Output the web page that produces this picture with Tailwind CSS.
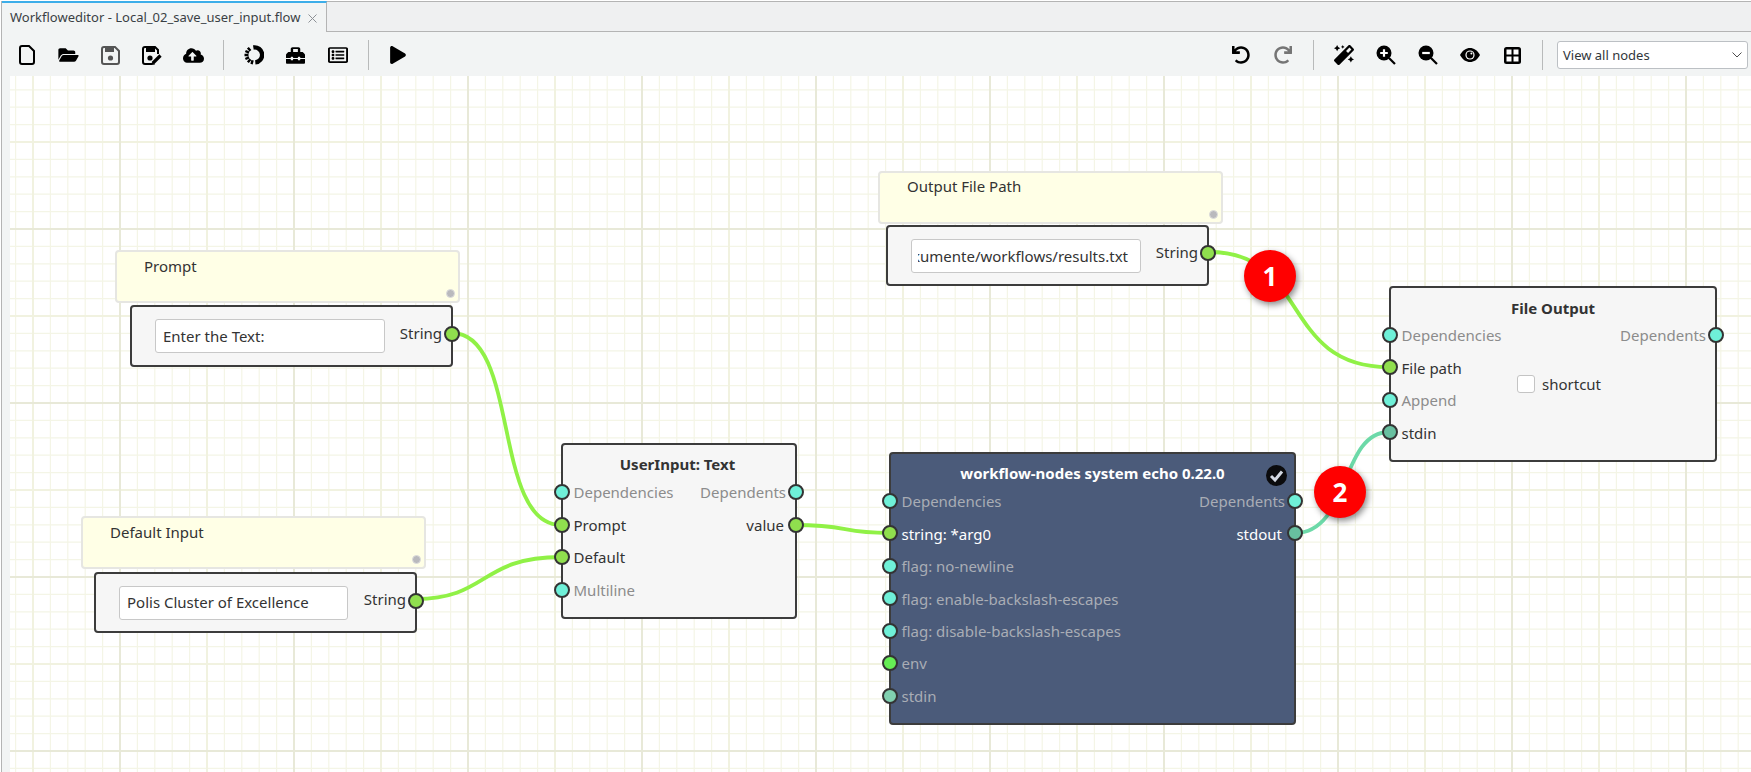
<!doctype html>
<html>
  <head>
    <title>Workfloweditor</title>
    <meta charset="UTF-8" />
    <script src="https://cdn.jsdelivr.net/npm/@tailwindcss/browser@4"></script>
  </head>
  <body class="bg-white h-[772px] w-[1751px] overflow-hidden pl-px pt-px font-['Noto_Sans',sans-serif] text-[#333]">
    <div class="h-[771px] flex flex-col border-l border-[#b4b4b4] bg-[#f2f4f4]">
      <!-- tab bar -->
      <div class="h-[31px] flex shrink-0 bg-[#eff0f1]">
        <div class="w-[325px] flex items-center pl-[8px] border-t-2 border-r border-t-[#3daee9] border-r-[#b4b4b4] bg-[#f2f4f4] text-[13px] text-[#3a3f44]">
          <span class="whitespace-nowrap">Workfloweditor - Local_02_save_user_input.flow</span>
          <svg class="ml-[8px] mt-px" width="9" height="9" viewBox="0 0 9 9"><path d="M.5.5l8 8M8.5.5l-8 8" stroke="#8d9196" fill="none" /></svg>
        </div>
        <div class="flex-1 border-t border-b border-[#b4b4b4]"></div>
      </div>

      <!-- toolbar -->
      <div class="h-[44px] flex shrink-0 items-center pt-[2px] pl-[4px]">
        <button class="w-[41.7px] h-[42px] flex items-center justify-center">
          <svg width="16" height="20" viewBox="0 0 16 20"><path d="M3 1H10L15 6V17A2 2 0 0 1 13 19H3A2 2 0 0 1 1 17V3A2 2 0 0 1 3 1Z" fill="none" stroke="#000" stroke-width="2" /></svg>
        </button>
        <button class="w-[41.7px] h-[42px] flex items-center justify-center">
          <svg width="21" height="18" viewBox="0 0 576 512"><path d="M572.694 292.093L500.27 416.248A63.997 63.997 0 0 1 444.989 448H45.025c-18.523 0-30.064-20.093-20.731-36.093l72.424-124.155A64 64 0 0 1 152 256h399.964c18.523 0 30.064 20.093 20.73 36.093zM152 224h328v-48c0-26.51-21.49-48-48-48H272l-64-64H48C21.49 64 0 85.49 0 112v278.046l69.077-118.418C86.214 242.25 118.179 224 152 224z" /></svg>
        </button>
        <button class="w-[41.7px] h-[42px] flex items-center justify-center">
          <svg width="19" height="19" viewBox="0 0 19 19"><path d="M3 1H14L18 5V16A2 2 0 0 1 16 18H3A2 2 0 0 1 1 16V3A2 2 0 0 1 3 1Z" fill="none" stroke="#555" stroke-width="2" /><rect x="4" y="1" width="9" height="5" fill="#555" /><circle cx="9.5" cy="12" r="2.6" fill="#555" /></svg>
        </button>
        <button class="w-[41.7px] h-[42px] flex items-center justify-center">
          <svg width="20" height="19" viewBox="0 0 20 19"><path d="M10 18H3A2 2 0 0 1 1 16V3A2 2 0 0 1 3 1H13L16 4V8" fill="none" stroke="#000" stroke-width="2" /><rect x="4" y="1" width="9" height="5" /><circle cx="8" cy="12" r="2.6" /><path d="M11 17L18.5 9.5" stroke="#000" stroke-width="3.2" /><path d="M9.5 19L10 15.5L13 18.5Z" /></svg>
        </button>
        <button class="w-[41.7px] h-[42px] flex items-center justify-center">
          <svg width="21" height="17" viewBox="0 0 640 512"><path d="M537.6 226.6c4.1-10.7 6.4-22.4 6.4-34.6 0-53-43-96-96-96-19.7 0-38.1 6-53.3 16.2C367 64.2 315.3 32 256 32c-88.4 0-160 71.6-160 160 0 2.7.1 5.4.2 8.1C40.2 219.8 0 273.2 0 336c0 79.5 64.5 144 144 144h368c70.7 0 128-57.3 128-128 0-61.9-44-113.6-102.4-125.4zM393.4 288H328v112c0 8.8-7.2 16-16 16h-48c-8.8 0-16-7.2-16-16V288h-65.4c-14.3 0-21.4-17.2-11.3-27.3l105.4-105.4c6.2-6.2 16.4-6.2 22.6 0l105.4 105.4c10.1 10.1 2.9 27.3-11.3 27.3z" /></svg>
        </button>
        <div class="w-px h-[30px] mx-[9px] bg-[#b8baba]"></div>
        <button class="w-[41.7px] h-[42px] flex items-center justify-center">
          <svg width="20" height="20" viewBox="0 0 20 20"><path d="M9.35 2.53A7.5 7.5 0 1 1 11.3 17.39" fill="none" stroke="#000" stroke-width="4.4" /><path d="M8.58 15.31L7.54 19.18M6.46 14.21L3.89 17.28M5.02 12.33L1.39 14.02M4.5 10H.5M5.02 7.67L1.39 5.98M6.46 5.79L3.89 2.72" stroke="#000" stroke-width="2.4" /></svg>
        </button>
        <button class="w-[41.7px] h-[42px] flex items-center justify-center">
          <svg width="21" height="19" viewBox="0 0 512 512"><path d="M502.63 214.63l-45.25-45.25c-6-6-14.14-9.37-22.63-9.37H384V80c0-26.51-21.49-48-48-48H176c-26.51 0-48 21.49-48 48v80H77.25c-8.49 0-16.62 3.37-22.63 9.37L9.37 214.63c-6 6.01-9.37 14.14-9.37 22.63V320h128v-16c0-8.84 7.16-16 16-16h32c8.84 0 16 7.16 16 16v16h128v-16c0-8.84 7.16-16 16-16h32c8.84 0 16 7.16 16 16v16h128v-82.75c0-8.48-3.37-16.62-9.37-22.62zM320 160H192V80h128v80zm64 208c0 8.84-7.16 16-16 16h-32c-8.84 0-16-7.16-16-16v-16H192v16c0 8.84-7.16 16-16 16h-32c-8.84 0-16-7.16-16-16v-16H0v96c0 17.67 14.33 32 32 32h448c17.67 0 32-14.33 32-32v-96H384v16z" /></svg>
        </button>
        <button class="w-[41.7px] h-[42px] flex items-center justify-center">
          <svg width="20" height="18" viewBox="0 0 512 512" preserveAspectRatio="none"><path d="M464 32H48C21.49 32 0 53.49 0 80v352c0 26.51 21.49 48 48 48h416c26.51 0 48-21.49 48-48V80c0-26.51-21.49-48-48-48zm-6 400H54a6 6 0 0 1-6-6V86a6 6 0 0 1 6-6h404a6 6 0 0 1 6 6v340a6 6 0 0 1-6 6zm-42-92v24c0 6.627-5.373 12-12 12H204c-6.627 0-12-5.373-12-12v-24c0-6.627 5.373-12 12-12h200c6.627 0 12 5.373 12 12zm0-96v24c0 6.627-5.373 12-12 12H204c-6.627 0-12-5.373-12-12v-24c0-6.627 5.373-12 12-12h200c6.627 0 12 5.373 12 12zm0-96v24c0 6.627-5.373 12-12 12H204c-6.627 0-12-5.373-12-12v-24c0-6.627 5.373-12 12-12h200c6.627 0 12 5.373 12 12zm-252 12c0 19.882-16.118 36-36 36s-36-16.118-36-36 16.118-36 36-36 36 16.118 36 36zm0 96c0 19.882-16.118 36-36 36s-36-16.118-36-36 16.118-36 36-36 36 16.118 36 36zm0 96c0 19.882-16.118 36-36 36s-36-16.118-36-36 16.118-36 36-36 36 16.118 36 36z" /></svg>
        </button>
        <div class="w-px h-[30px] mx-[9px] bg-[#b8baba]"></div>
        <button class="w-[41.7px] h-[42px] flex items-center justify-center">
          <svg width="16" height="18" viewBox="0 0 448 512"><path d="M424.4 214.7L72.4 6.6C43.8-10.3 0 6.1 0 47.9V464c0 37.5 40.7 60.1 72.4 41.3l352-208c31.4-18.5 31.5-64.1 0-82.6z" /></svg>
        </button>

        <button class="w-[42px] h-[42px] ml-auto flex items-center justify-center">
          <svg width="18" height="18" viewBox="0 0 512 512"><path d="M212.333 224.333H12c-6.627 0-12-5.373-12-12V12C0 5.373 5.373 0 12 0h48c6.627 0 12 5.373 12 12v78.112C117.773 39.279 184.26 7.47 258.175 8.007c136.906.994 246.448 111.623 246.157 248.532C504.041 393.258 393.12 504 256.333 504c-64.089 0-122.496-24.313-166.51-64.215-5.099-4.622-5.334-12.554-.467-17.42l33.967-33.967c4.474-4.474 11.662-4.717 16.401-.525C170.76 415.336 211.58 432 256.333 432c97.268 0 176-78.716 176-176 0-97.267-78.716-176-176-176-58.496 0-110.28 28.476-142.274 72.333h98.274c6.627 0 12 5.373 12 12v48c0 6.627-5.373 12-12 12z" /></svg>
        </button>
        <button class="w-[42px] h-[42px] flex items-center justify-center">
          <svg class="-scale-x-100" width="18" height="18" viewBox="0 0 512 512"><path fill="#757575" d="M212.333 224.333H12c-6.627 0-12-5.373-12-12V12C0 5.373 5.373 0 12 0h48c6.627 0 12 5.373 12 12v78.112C117.773 39.279 184.26 7.47 258.175 8.007c136.906.994 246.448 111.623 246.157 248.532C504.041 393.258 393.12 504 256.333 504c-64.089 0-122.496-24.313-166.51-64.215-5.099-4.622-5.334-12.554-.467-17.42l33.967-33.967c4.474-4.474 11.662-4.717 16.401-.525C170.76 415.336 211.58 432 256.333 432c97.268 0 176-78.716 176-176 0-97.267-78.716-176-176-176-58.496 0-110.28 28.476-142.274 72.333h98.274c6.627 0 12 5.373 12 12v48c0 6.627-5.373 12-12 12z" /></svg>
        </button>
        <div class="w-px h-[30px] mx-[9px] bg-[#b8baba]"></div>
        <button class="w-[42px] h-[42px] flex items-center justify-center">
          <svg width="20" height="20" viewBox="0 0 512 512"><path d="M224 96l16-32 32-16-32-16-16-32-16 32-32 16 32 16 16 32zM80 160l26.66-53.33L160 80l-53.34-26.67L80 0 53.34 53.33 0 80l53.34 26.67L80 160zm352 128l-26.66 53.33L352 368l53.34 26.67L432 448l26.66-53.33L512 368l-53.34-26.67L432 288zm70.62-193.77L417.77 9.38C411.53 3.12 403.34 0 395.15 0c-8.19 0-16.38 3.12-22.63 9.38L9.38 372.52c-12.5 12.5-12.5 32.76 0 45.25l84.85 84.85c6.25 6.25 14.44 9.37 22.62 9.37 8.19 0 16.38-3.12 22.63-9.37l363.14-363.15c12.5-12.48 12.5-32.75 0-45.24zM359.45 203.46l-50.91-50.91 86.6-86.6 50.91 50.91-86.6 86.6z" /></svg>
        </button>
        <button class="w-[42px] h-[42px] flex items-center justify-center">
          <svg width="20" height="20" viewBox="0 0 20 20"><circle cx="8" cy="8" r="7.5" /><path d="M13 13L19 19" stroke="#000" stroke-width="2.2" /><path d="M8 4.2V11.8M4.2 8H11.8" stroke="#fff" stroke-width="2.2" /></svg>
        </button>
        <button class="w-[42px] h-[42px] flex items-center justify-center">
          <svg width="20" height="20" viewBox="0 0 20 20"><circle cx="8" cy="8" r="7.5" /><path d="M13 13L19 19" stroke="#000" stroke-width="2.2" /><path d="M4.2 8H11.8" stroke="#fff" stroke-width="2.2" /></svg>
        </button>
        <button class="w-[42px] h-[42px] flex items-center justify-center">
          <svg width="20" height="14" viewBox="0 0 20 14"><path d="M0 7C3 2 6 0 10 0s7 2 10 7c-3 5-6 7-10 7S3 12 0 7z" /><circle cx="10" cy="7" r="4.6" fill="#fff" /><circle cx="10" cy="7" r="3.4" /><circle cx="11.4" cy="5.6" r="1" fill="#fff" /></svg>
        </button>
        <button class="w-[42px] h-[42px] flex items-center justify-center">
          <svg width="17" height="17" viewBox="0 0 17 17"><rect width="17" height="17" rx="2.5" /><path d="M2.5 2.5H7.5V7.5H2.5ZM9.5 2.5H14.5V7.5H9.5ZM2.5 9.5H7.5V14.5H2.5ZM9.5 9.5H14.5V14.5H9.5Z" fill="#fff" /></svg>
        </button>
        <div class="w-px h-[30px] ml-[9px] bg-[#b8baba]"></div>
        <div class="w-[191px] h-[28px] ml-[14px] mr-[3px] flex items-center justify-between pl-[5px] pr-[5px] bg-white border border-[#bcc0c4] rounded-[3px] text-[13px] text-[#31363b]">
          <span class="mt-px">View all nodes</span>
          <svg width="10" height="6" viewBox="0 0 10 6"><path d="M.5.5L5 5L9.5.5" fill="none" stroke="#4d4d4d" /></svg>
        </div>
      </div>

      <!-- workspace -->
      <div class="flex-1 pl-[8px]">
        <div class="relative h-full bg-white overflow-hidden text-[15px] leading-[20px]">
          <svg class="absolute inset-0" width="1741" height="696">
            <defs>
              <pattern id="grid" patternUnits="userSpaceOnUse" x="110" y="153" width="174" height="174">
                <path fill="none" stroke="#f4f5e6" stroke-width="1.2" d="M17.4 0V174M34.8 0V174M52.2 0V174M69.6 0V174M104.4 0V174M121.8 0V174M139.2 0V174M156.6 0V174M0 17.4H174M0 34.8H174M0 52.2H174M0 69.6H174M0 104.4H174M0 121.8H174M0 139.2H174M0 156.6H174" />
                <path fill="none" stroke="#f1f2e0" stroke-width="2" d="M87 0V174M0 87H174" />
                <path fill="none" stroke="#e8e9d8" stroke-width="2" d="M0 0V174M174 0V174M0 0H174M0 174H174" />
              </pattern>
            </defs>
            <rect width="1741" height="696" fill="url(#grid)" />
            <g fill="none" stroke="#90f146" stroke-width="3.8">
              <path d="M442 257C510 257 482 449 551 449" />
              <path d="M406 523C478 523 470 481 551 481" />
              <path d="M785 449C840 449 830 457 879 457" />
              <path d="M1199 176C1300 176 1270 291 1379 291" />
            </g>
            <path d="M1285 457C1340 457 1330 356 1379 356" fill="none" stroke="#6cd9a8" stroke-width="3.8" />
          </svg>

          <!-- Prompt -->
          <div class="absolute left-[105px] top-[174px] w-[345px] h-[53px] bg-[#ffffe6] border-2 border-[#e6e6e2] rounded-[4px] pl-[27px] pt-[4px]">
            Prompt
            <span class="absolute right-[3px] bottom-[3px] w-[9px] h-[9px] rounded-full bg-[#b9b9bd] border border-[#dcdcdc]"></span>
          </div>
          <div class="absolute left-[120px] top-[229px] w-[323px] h-[62px] flex items-center bg-[#f6f6f6] border-2 border-[#3c3c3c] rounded-[4px] pl-[23px]">
            <div class="w-[230px] h-[34px] flex items-center px-[7px] bg-white border border-[#c8c8c8] rounded-[3px]">Enter the Text:</div>
            <span class="ml-auto mr-[9px] mb-[7px]">String</span>
            <span class="absolute right-[-9px] top-[19px] w-[16px] h-[16px] rounded-full bg-[#90df4e] border-[2.5px] border-[#333]"></span>
          </div>

          <!-- Default Input -->
          <div class="absolute left-[71px] top-[440px] w-[345px] h-[53px] bg-[#ffffe6] border-2 border-[#e6e6e2] rounded-[4px] pl-[27px] pt-[4px]">
            Default Input
            <span class="absolute right-[3px] bottom-[3px] w-[9px] h-[9px] rounded-full bg-[#b9b9bd] border border-[#dcdcdc]"></span>
          </div>
          <div class="absolute left-[84px] top-[496px] w-[323px] h-[61px] flex items-center bg-[#f6f6f6] border-2 border-[#3c3c3c] rounded-[4px] pl-[23px]">
            <div class="w-[229px] h-[34px] flex items-center px-[7px] pb-[2px] bg-white border border-[#c8c8c8] rounded-[3px]">Polis Cluster of Excellence</div>
            <span class="ml-auto mr-[9px] mb-[7px]">String</span>
            <span class="absolute right-[-9px] top-[18.5px] w-[16px] h-[16px] rounded-full bg-[#90df4e] border-[2.5px] border-[#333]"></span>
          </div>

          <!-- Output File Path -->
          <div class="absolute left-[868px] top-[95px] w-[345px] h-[53px] bg-[#ffffe6] border-2 border-[#e6e6e2] rounded-[4px] pl-[27px] pt-[3px]">
            Output File Path
            <span class="absolute right-[3px] bottom-[3px] w-[9px] h-[9px] rounded-full bg-[#b9b9bd] border border-[#dcdcdc]"></span>
          </div>
          <div class="absolute left-[876px] top-[149px] w-[323px] h-[61px] flex items-center bg-[#f6f6f6] border-2 border-[#3c3c3c] rounded-[4px] pl-[23px]">
            <div class="w-[230px] h-[34px] flex items-center px-[6px] bg-white border border-[#c8c8c8] rounded-[3px]">
              <div class="flex-1 flex justify-end overflow-hidden whitespace-nowrap pr-[6px]">Dokumente/workflows/results.txt</div>
            </div>
            <span class="ml-auto mr-[9px] mb-[7px]">String</span>
            <span class="absolute right-[-9px] top-[18px] w-[16px] h-[16px] rounded-full bg-[#90df4e] border-[2.5px] border-[#333]"></span>
          </div>

          <!-- UserInput: Text -->
          <div class="absolute left-[551px] top-[367px] w-[236px] h-[176px] bg-[#f6f6f6] border-2 border-[#3c3c3c] rounded-[4px]">
            <div class="h-[31px] pt-[8px] pr-[3px] text-center font-bold leading-[23px]">UserInput: Text</div>
            <div class="relative h-[32.5px] flex items-center justify-between pl-[10.5px] pr-[9px] text-[#8c8c8c]">
              <span>Dependencies</span><span>Dependents</span>
              <span class="absolute left-[-9px] top-[8px] w-[16px] h-[16px] rounded-full bg-[#6ff0d8] border-[2.5px] border-[#333]"></span>
              <span class="absolute right-[-9px] top-[8px] w-[16px] h-[16px] rounded-full bg-[#6ff0d8] border-[2.5px] border-[#333]"></span>
            </div>
            <div class="relative h-[32.5px] flex items-center justify-between pl-[10.5px] pr-[11px]">
              <span>Prompt</span><span>value</span>
              <span class="absolute left-[-9px] top-[8px] w-[16px] h-[16px] rounded-full bg-[#90df4e] border-[2.5px] border-[#333]"></span>
              <span class="absolute right-[-9px] top-[8px] w-[16px] h-[16px] rounded-full bg-[#90df4e] border-[2.5px] border-[#333]"></span>
            </div>
            <div class="relative h-[32.5px] flex items-center pl-[10.5px]">
              <span>Default</span>
              <span class="absolute left-[-9px] top-[8px] w-[16px] h-[16px] rounded-full bg-[#90df4e] border-[2.5px] border-[#333]"></span>
            </div>
            <div class="relative h-[32.5px] flex items-center pl-[10.5px] text-[#8c8c8c]">
              <span>Multiline</span>
              <span class="absolute left-[-9px] top-[8px] w-[16px] h-[16px] rounded-full bg-[#6ff0d8] border-[2.5px] border-[#333]"></span>
            </div>
          </div>

          <!-- system echo -->
          <div class="absolute left-[879px] top-[376px] w-[407px] h-[273px] bg-[#4b5b7a] border-2 border-[#3c3c3c] rounded-[4px] text-[#a9adb5]">
            <div class="h-[31px] pt-[8px] text-center font-bold leading-[23px] text-white">workflow-nodes system echo 0.22.0</div>
            <svg class="absolute right-[7px] top-[11px]" width="21" height="21" viewBox="0 0 21 21"><circle cx="10.5" cy="10.5" r="10.5" fill="#0b0b0d" /><path d="M5 11L9 15L16 6.5" fill="none" stroke="#d3d8e2" stroke-width="3" /></svg>
            <div class="relative h-[32.45px] flex items-center justify-between pl-[10.5px] pr-[9px]">
              <span>Dependencies</span><span>Dependents</span>
              <span class="absolute left-[-9px] top-[8px] w-[16px] h-[16px] rounded-full bg-[#6ff0d8] border-[2.5px] border-[#333]"></span>
              <span class="absolute right-[-9px] top-[8px] w-[16px] h-[16px] rounded-full bg-[#6ff0d8] border-[2.5px] border-[#333]"></span>
            </div>
            <div class="relative h-[32.45px] flex items-center justify-between pl-[10.5px] pr-[12px] text-white">
              <span>string: *arg0</span><span>stdout</span>
              <span class="absolute left-[-9px] top-[8px] w-[16px] h-[16px] rounded-full bg-[#90df4e] border-[2.5px] border-[#333]"></span>
              <span class="absolute right-[-9px] top-[8px] w-[16px] h-[16px] rounded-full bg-[#68c0a0] border-[2.5px] border-[#333]"></span>
            </div>
            <div class="relative h-[32.45px] flex items-center pl-[10.5px]">
              <span>flag: no-newline</span>
              <span class="absolute left-[-9px] top-[8px] w-[16px] h-[16px] rounded-full bg-[#6ff0d8] border-[2.5px] border-[#333]"></span>
            </div>
            <div class="relative h-[32.45px] flex items-center pl-[10.5px]">
              <span>flag: enable-backslash-escapes</span>
              <span class="absolute left-[-9px] top-[8px] w-[16px] h-[16px] rounded-full bg-[#6ff0d8] border-[2.5px] border-[#333]"></span>
            </div>
            <div class="relative h-[32.45px] flex items-center pl-[10.5px]">
              <span>flag: disable-backslash-escapes</span>
              <span class="absolute left-[-9px] top-[8px] w-[16px] h-[16px] rounded-full bg-[#6ff0d8] border-[2.5px] border-[#333]"></span>
            </div>
            <div class="relative h-[32.45px] flex items-center pl-[10.5px]">
              <span>env</span>
              <span class="absolute left-[-9px] top-[8px] w-[16px] h-[16px] rounded-full bg-[#66ee55] border-[2.5px] border-[#333]"></span>
            </div>
            <div class="relative h-[32.45px] flex items-center pl-[10.5px]">
              <span>stdin</span>
              <span class="absolute left-[-9px] top-[8px] w-[16px] h-[16px] rounded-full bg-[#80d0b0] border-[2.5px] border-[#333]"></span>
            </div>
          </div>

          <!-- File Output -->
          <div class="absolute left-[1379px] top-[210px] w-[328px] h-[176px] bg-[#f6f6f6] border-2 border-[#3c3c3c] rounded-[4px]">
            <div class="h-[31px] pt-[9px] text-center font-bold leading-[23px]">File Output</div>
            <div class="flex">
              <div class="w-[126px]">
                <div class="relative h-[32.45px] flex items-center pl-[10.5px] text-[#8c8c8c]">
                  <span>Dependencies</span>
                  <span class="absolute left-[-9px] top-[8px] w-[16px] h-[16px] rounded-full bg-[#6ff0d8] border-[2.5px] border-[#333]"></span>
                </div>
                <div class="relative h-[32.45px] flex items-center pl-[10.5px]">
                  <span>File path</span>
                  <span class="absolute left-[-9px] top-[8px] w-[16px] h-[16px] rounded-full bg-[#90df4e] border-[2.5px] border-[#333]"></span>
                </div>
                <div class="relative h-[32.45px] flex items-center pl-[10.5px] text-[#8c8c8c]">
                  <span>Append</span>
                  <span class="absolute left-[-9px] top-[8px] w-[16px] h-[16px] rounded-full bg-[#6ff0d8] border-[2.5px] border-[#333]"></span>
                </div>
                <div class="relative h-[32.45px] flex items-center pl-[10.5px]">
                  <span>stdin</span>
                  <span class="absolute left-[-9px] top-[8px] w-[16px] h-[16px] rounded-full bg-[#68c0a0] border-[2.5px] border-[#333]"></span>
                </div>
              </div>
              <div class="flex items-center gap-[7px]">
                <span class="w-[18px] h-[18px] bg-white border border-[#c4c4c4] rounded-[3px]"></span>
                <span>shortcut</span>
              </div>
              <div class="flex-1">
                <div class="relative h-[32.45px] flex items-center justify-end pr-[9px] text-[#8c8c8c]">
                  <span>Dependents</span>
                  <span class="absolute right-[-9px] top-[8px] w-[16px] h-[16px] rounded-full bg-[#6ff0d8] border-[2.5px] border-[#333]"></span>
                </div>
              </div>
            </div>
          </div>

          <!-- callouts -->
          <div class="absolute left-[1234px] top-[174px] w-[52px] h-[52px] rounded-full bg-[#ff0000] flex items-center justify-center text-white text-[26px] font-bold shadow-[2px_3px_6px_rgba(0,0,0,0.45)]">1</div>
          <div class="absolute left-[1304px] top-[390px] w-[52px] h-[52px] rounded-full bg-[#ff0000] flex items-center justify-center text-white text-[26px] font-bold shadow-[2px_3px_6px_rgba(0,0,0,0.45)]">2</div>
        </div>
      </div>
    </div>
  </body>
</html>
